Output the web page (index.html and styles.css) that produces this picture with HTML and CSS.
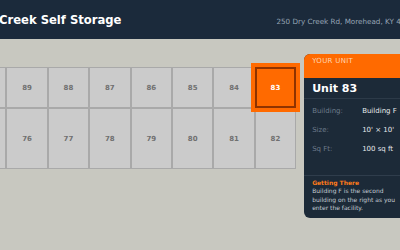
FILE: index.html
```html
<!DOCTYPE html>
<html>
<head>
  <title>Dry Creek Self Storage - Unit 83</title>
  <link rel="stylesheet" href="styles.css">
</head>
<body>
<div class="page">
  <header class="topbar">
    <h1 class="brand">Dry Creek Self Storage</h1>
    <p class="address">250 Dry Creek Rd, Morehead, KY 40351</p>
  </header>

  <main class="content">
    <div class="site-map">
      <div class="row row-top">
        <div class="unit">90</div>
        <div class="unit">89</div>
        <div class="unit">88</div>
        <div class="unit">87</div>
        <div class="unit">86</div>
        <div class="unit">85</div>
        <div class="unit">84</div>
        <div class="unit selected">83</div>
      </div>
      <div class="row row-bottom">
        <div class="unit">75</div>
        <div class="unit">76</div>
        <div class="unit">77</div>
        <div class="unit">78</div>
        <div class="unit">79</div>
        <div class="unit">80</div>
        <div class="unit">81</div>
        <div class="unit">82</div>
      </div>
    </div>

    <aside class="unit-card">
      <div class="card-head">Your Unit</div>
      <div class="card-body">
        <h2 class="unit-name">Unit 83</h2>
        <div class="details">
          <div class="detail"><span class="label">Building:</span><span class="value">Building F</span></div>
          <div class="detail"><span class="label">Size:</span><span class="value">10' &times; 10'</span></div>
          <div class="detail"><span class="label">Sq Ft:</span><span class="value">100 sq ft</span></div>
        </div>
        <div class="directions">
          <h3>Getting There</h3>
          <p>Building F is the second building on the right as you enter the facility.</p>
        </div>
      </div>
    </aside>
  </main>
</div>
</body>
</html>
```

FILE: styles.css
```css
body {
    background-color: #c8c8c0;
    font-family: "DejaVu Sans", Verdana, sans-serif;
    margin: 0;
    padding: 0;
    overflow: hidden;
}

.page {
    width: 480px;
    margin-left: -35px;
}

.topbar {
    background-color: #1b2a3b;
    height: 39px;
    display: flex;
    align-items: center;
    justify-content: space-between;
    padding: 0 26px 0 7px;
    box-sizing: border-box;
}

.brand {
    color: #ffffff;
    font-size: 11.6px;
    font-weight: bold;
    margin: 0;
}

.address {
    color: #98a6b6;
    font-size: 7.2px;
    margin: 4px 0 0 0;
}

.content {
    display: flex;
    align-items: flex-start;
    gap: 8px;
    padding-top: 15px;
}

.site-map {
    margin-top: 13px;
}

.row {
    display: flex;
}

.unit {
    width: 41.4px;
    box-sizing: border-box;
    border: 1px solid #a9a9a9;
    background-color: #cbcbcb;
    color: #707070;
    font-size: 7px;
    font-weight: bold;
    display: flex;
    align-items: center;
    justify-content: center;
}

.row-top .unit {
    height: 41px;
}

.row-bottom .unit {
    height: 61px;
}

.unit.selected {
    background-color: #ff6a00;
    border: 2px solid #8f3300;
    box-shadow: 0 0 0 4px #ff6a00;
    color: #ffffff;
    position: relative;
}

.unit-card {
    width: 104px;
    background-color: #1c2a38;
    border-radius: 6px;
    overflow: hidden;
}

.card-head {
    background-color: #ff6a00;
    color: #ffd5b3;
    font-size: 7px;
    text-transform: uppercase;
    letter-spacing: 0.3px;
    height: 24px;
    padding: 3px 8px 0 8px;
    box-sizing: border-box;
}

.card-body {
    padding: 0 0 5px 0;
}

.unit-name {
    color: #ffffff;
    font-size: 11px;
    line-height: 13px;
    font-weight: bold;
    margin: 0;
    padding: 4px 8px 3px 8px;
    border-bottom: 1px solid #2c3a48;
}

.details {
    padding: 2px 8px 17px 8px;
    border-bottom: 1px solid #2f3d4c;
}

.detail {
    display: flex;
    height: 19px;
    align-items: center;
    font-size: 7px;
    white-space: nowrap;
}

.label {
    color: #6c7b8b;
    width: 50px;
    flex-shrink: 0;
}

.value {
    color: #e6e9ec;
}

.directions {
    padding: 3px 8px 0 8px;
}

.directions h3 {
    color: #ff7a1a;
    font-size: 6px;
    line-height: 8px;
    font-weight: bold;
    margin: 0;
}

.directions p {
    color: #c3cad2;
    font-size: 6px;
    line-height: 8.5px;
    margin: 0;
}
```
